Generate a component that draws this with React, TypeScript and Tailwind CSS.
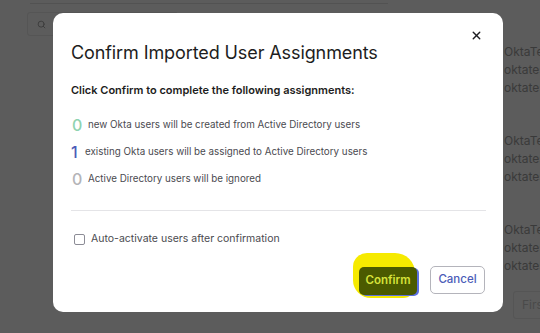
import { Search, X } from 'lucide-react'

const rows = [
  { count: '0', text: 'new Okta users will be created from Active Directory users', color: 'text-[#8fd3b0]', w: 'w-[10px]' },
  { count: '1', text: 'existing Okta users will be assigned to Active Directory users', color: 'text-[#4b5bb8] -ml-[1px]', w: 'w-[8px]' },
  { count: '0', text: 'Active Directory users will be ignored', color: 'text-[#b4b4b8]', w: 'w-[10px]' }
]

const groups = [0, 1, 2]

export default function App() {
  return (
    <div className="relative h-[333px] w-[540px] overflow-hidden bg-[#5c5c5c] font-['Inter',sans-serif]">
      {/* page behind the overlay */}
      <div className="flex h-full flex-col">
        <div className="ml-[30px] mt-[3px] h-px w-[358px] bg-[#525252]" />
        <div className="ml-[27px] mt-[8px] flex h-[24px] w-[150px] items-center rounded-l-[3px] border border-[#555] pl-[9px]">
          <Search className="h-[9px] w-[9px] text-[#3c3c3c]" strokeWidth={2.5} />
        </div>
        <div className="ml-[504px] mt-[8px] flex flex-col gap-[38px]">
          {groups.map((g) => (
            <div key={g} className="flex flex-col gap-[3px] text-[12px] leading-[15px] text-[#3a3a3a]">
              <span>OktaTest</span>
              <span>oktatest</span>
              <span>oktatest</span>
            </div>
          ))}
        </div>
        <div className="ml-[513px] mt-[18px] flex h-[28px] w-[40px] items-center rounded-[3px] border border-[#555] pl-[8px] text-[12px] text-[#4a4a4a]">
          First
        </div>
      </div>

      {/* modal */}
      <div className="absolute left-[53px] top-[13px] h-[299px] w-[450px] rounded-[10px] bg-white px-[18px] pt-[28px]">
        <button className="absolute right-[20px] top-[16px] text-[#1d1d21]">
          <X className="h-[13px] w-[13px]" strokeWidth={2.5} />
        </button>
        <h1 className="text-[18px] leading-[24px] tracking-[-0.1px] text-[#1d1d21]">
          Confirm Imported User Assignments
        </h1>
        <p className="mt-[17px] text-[11px] font-semibold leading-[16px] text-[#1d1d21]">
          Click Confirm to complete the following assignments:
        </p>
        <div className="mt-[18px] flex flex-col gap-[9px] pl-[1px]">
          {rows.map((r, i) => (
            <div key={i} className="flex h-[18px] items-center gap-[6px]">
              <span className={`${r.w} text-[16px] font-medium leading-[18px] ${r.color}`}>{r.count}</span>
              <span className="text-[9.8px] leading-[16px] text-[#4a4a4f]">{r.text}</span>
            </div>
          ))}
        </div>
        <div className="mt-[22px] h-px w-[415px] bg-[#e4e4e7]" />
        <label className="mt-[20px] flex items-center gap-[6px] pl-[3px]">
          <span className="h-[11px] w-[11px] rounded-[2px] border border-[#8c8c96] bg-white" />
          <span className="text-[10.5px] leading-[16px] text-[#4a4a4f]">Auto-activate users after confirmation</span>
        </label>
        <div className="mt-[19px] flex justify-end gap-[13px]">
          <div className="relative">
            <div className="absolute -left-[6px] -top-[13px] h-[45px] w-[62px] rounded-bl-[18px] rounded-br-[12px] rounded-tl-[14px] rounded-tr-[20px] bg-[#f6ea00]" />
            <button className="relative h-[28px] w-[58px] rounded-[5px] bg-[#4b5a00] text-[11.5px] font-semibold text-[#d6e23a] shadow-[2px_1px_0_#5a6fe0]">
              Confirm
            </button>
          </div>
          <button className="h-[28px] w-[55px] rounded-[5px] border border-[#b4b4bb] bg-white text-[11.5px] font-medium text-[#4b5bb8]">
            Cancel
          </button>
        </div>
      </div>
    </div>
  )
}
